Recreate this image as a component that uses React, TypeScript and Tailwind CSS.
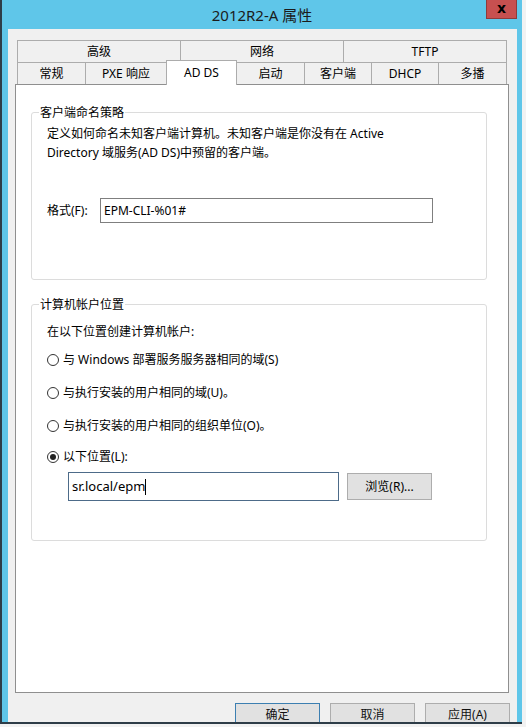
import React from "react";

const FONT = "font-['Noto_Sans','Noto_Sans_CJK_SC',sans-serif]";

const TOP_TABS = ["高级", "网络", "TFTP"];

const BOTTOM_TABS: { label: string; w: string; active?: boolean }[] = [
  { label: "常规", w: "w-[68px]" },
  { label: "PXE 响应", w: "w-[81px]" },
  { label: "AD DS", w: "w-[71px]", active: true },
  { label: "启动", w: "w-[67px]" },
  { label: "客户端", w: "w-[67px]" },
  { label: "DHCP", w: "w-[67px]" },
  { label: "多播", w: "w-[69px]" },
];

function Radio({ checked, label }: { checked?: boolean; label: string }) {
  return (
    <div className="flex items-center h-[19px] pl-[15px]">
      <span className="w-[12px] h-[12px] rounded-full border border-[#333] bg-white flex items-center justify-center">
        {checked && <span className="w-[6px] h-[6px] rounded-full bg-[#222]" />}
      </span>
      <span className="ml-[4px] text-[12px] leading-[19px]">{label}</span>
    </div>
  );
}

function Group({ title, h, children }: { title: string; h: string; children: React.ReactNode }) {
  return (
    <div className={`relative ml-[15px] w-[456px] ${h} border border-[#dcdcdc] rounded-[3px]`}>
      <span className="absolute -top-[10px] left-[7px] px-[1px] bg-white text-[12px] leading-[19px]">{title}</span>
      {children}
    </div>
  );
}

function DialogButton({ label, primary }: { label: string; primary?: boolean }) {
  return (
    <button
      className={`w-[85px] h-[23px] shrink-0 bg-[#e1e1e1] border text-[12px] leading-[21px] text-[#111] ${
        primary ? "border-[#3c7fb1]" : "border-[#adadad]"
      }`}
    >
      {label}
    </button>
  );
}

export default function App() {
  return (
    <div className={`w-[526px] h-[727px] bg-[#f2f2f2] overflow-hidden text-black ${FONT}`}>
      <div className="w-[522px] h-[724px] flex flex-col bg-[#5fc6e9] border-l-2 border-b-2 border-[#2e3d48]">
        {/* title bar */}
        <div className="relative h-[29px] shrink-0 flex items-center justify-center">
          <span className="text-[15px] leading-none text-[#1b1b1b] pt-[1px]">2012R2-A 属性</span>
          <div className="absolute top-0 right-[5px] w-[31px] h-[19px] bg-[#c75050] border border-t-0 border-[#8f3b3b] flex items-center justify-center">
            <span className="text-[14px] font-bold leading-none text-black font-['DejaVu_Sans',sans-serif] -mt-[2px]">x</span>
          </div>
        </div>

        {/* client area */}
        <div className="flex-1 ml-[6px] w-[509px] bg-[#f0f0f0] overflow-hidden flex flex-col">
          {/* tabs */}
          <div className="mt-[11px] ml-[9px] w-[490px] flex flex-col text-[12px]">
            <div className="flex h-[22px]">
              {TOP_TABS.map((t, i) => (
                <div
                  key={t}
                  className={`flex-1 flex items-center justify-center border-t border-l border-[#acacac] bg-[#f0f0f0] ${
                    i === TOP_TABS.length - 1 ? "border-r" : ""
                  }`}
                >
                  {t}
                </div>
              ))}
            </div>
            <div className="flex h-[22px] items-end">
              {BOTTOM_TABS.map((t, i) =>
                t.active ? (
                  <div
                    key={t.label}
                    className={`${t.w} h-[25px] -mb-[1px] relative z-10 bg-white border border-b-0 border-[#acacac] flex justify-center pt-[3px]`}
                  >
                    {t.label}
                  </div>
                ) : (
                  <div
                    key={t.label}
                    className={`${t.w} h-[22px] flex items-center justify-center border-t border-[#acacac] bg-[#f0f0f0] ${
                      BOTTOM_TABS[i - 1]?.active ? "" : "border-l"
                    } ${i === BOTTOM_TABS.length - 1 ? "border-r" : ""}`}
                  >
                    {t.label}
                  </div>
                )
              )}
            </div>
          </div>

          {/* tab page */}
          <div className="ml-[7px] w-[494px] h-[609px] shrink-0 bg-white border border-[#8f8f8f]">
            <div className="pt-[27px]">
              <Group title="客户端命名策略" h="h-[168px]">
                <div className="pt-[11px] pl-[15px] text-[12px] leading-[19px]">
                  <div>定义如何命名未知客户端计算机。未知客户端是你没有在 Active</div>
                  <div>Directory 域服务(AD DS)中预留的客户端。</div>
                </div>
                <div className="mt-[36px] pl-[15px] flex items-center text-[12px]">
                  <span className="w-[53px]">格式(F):</span>
                  <div className="w-[333px] h-[25px] border border-[#7f7f7f] bg-white flex items-center px-[3px]">
                    EPM-CLI-%01#
                  </div>
                </div>
              </Group>
            </div>
            <div className="mt-[24px]">
              <Group title="计算机帐户位置" h="h-[237px]">
                <div className="pt-[17px] pl-[15px] text-[12px] leading-[19px]">在以下位置创建计算机帐户:</div>
                <div className="mt-[9px] flex flex-col gap-[14px]">
                  <Radio label="与 Windows 部署服务服务器相同的域(S)" />
                  <Radio label="与执行安装的用户相同的域(U)。" />
                  <Radio label="与执行安装的用户相同的组织单位(O)。" />
                </div>
                <div className="mt-[12px]">
                  <Radio checked label="以下位置(L):" />
                </div>
                <div className="mt-[6px] pl-[36px] flex items-start gap-[8px]">
                  <div className="w-[271px] h-[29px] border border-[#4d6b89] bg-white flex items-center px-[3px] text-[13px]">
                    sr.local/epm
                    <span className="w-px h-[16px] bg-black" />
                  </div>
                  <button className="mt-[1px] w-[85px] h-[27px] bg-[#e1e1e1] border border-[#adadad] text-[12px]">
                    浏览(R)...
                  </button>
                </div>
              </Group>
            </div>
          </div>

          {/* dialog buttons */}
          <div className="mt-[10px] pl-[227px] flex gap-[10px]">
            <DialogButton label="确定" primary />
            <DialogButton label="取消" />
            <DialogButton label="应用(A)" />
          </div>
        </div>
      </div>
    </div>
  );
}
